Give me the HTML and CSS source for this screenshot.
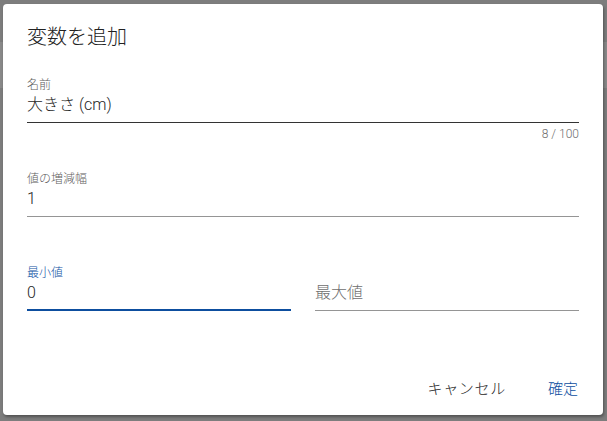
FILE: index.html
```html
<!DOCTYPE html>
<html lang="ja">
<head>
<meta charset="utf-8">
<title>変数を追加</title>
<link rel="stylesheet" href="styles.css">
</head>
<body>
<div class="dialog">
  <h2 class="dialog-title">変数を追加</h2>
  <div class="field">
    <div class="field-box">
      <div class="field-label">名前</div>
      <div class="field-value">大きさ (cm)</div>
    </div>
    <div class="field-hint">8 / 100</div>
  </div>
  <div class="field">
    <div class="field-box field-box--idle">
      <div class="field-label">値の増減幅</div>
      <div class="field-value">1</div>
    </div>
    <div class="field-hint"></div>
  </div>
  <div class="field-row">
    <div class="field">
      <div class="field-box field-box--focused">
        <div class="field-label">最小値</div>
        <div class="field-value">0</div>
      </div>
      <div class="field-hint"></div>
    </div>
    <div class="field">
      <div class="field-box field-box--idle">
        <div class="field-label"></div>
        <div class="field-value field-value--placeholder">最大値</div>
      </div>
      <div class="field-hint"></div>
    </div>
  </div>
  <div class="dialog-actions">
    <button class="btn btn--wide">キャンセル</button>
    <button class="btn btn--primary">確定</button>
  </div>
</div>
</body>
</html>
```
FILE: styles.css
```css
html, body {
  margin: 0;
  height: 100%;
}
body {
  padding: 4px 0 0 3px;
  box-sizing: border-box;
  background: linear-gradient(to bottom, #7d7d7d 0, #7d7d7d 42px, #898989 42px, #898989 88px, #7d7d7d 88px);
  font-family: Roboto, "Noto Sans CJK JP", sans-serif;
  color: rgba(0, 0, 0, 0.87);
}
.dialog {
  width: 600px;
  height: 411px;
  box-sizing: border-box;
  background: #fff;
  border-radius: 4px;
  padding: 21px 24px 8px;
  box-shadow: 1px 2px 3px rgba(0, 0, 0, 0.35);
  display: flex;
  flex-direction: column;
}
.dialog-title {
  margin: 0 0 28px;
  font-size: 20px;
  line-height: 24px;
  font-weight: 300;
  color: #222;
}
.field {
  display: flex;
  flex-direction: column;
  flex: 1;
  min-width: 0;
  margin-bottom: 29px;
}
.field-box {
  padding-bottom: 5px;
  border-bottom: 1px solid #333;
}
.field-box--idle {
  border-bottom-color: #959595;
}
.field-box--focused {
  padding-bottom: 4px;
  border-bottom: 2px solid #0d4e9f;
}
.field-label {
  height: 16px;
  font-size: 12px;
  line-height: 16px;
  font-weight: 300;
  color: #5e5e5e;
}
.field-box--focused .field-label {
  color: #0f52a4;
}
.field-value {
  font-size: 16px;
  line-height: 24px;
  height: 24px;
  font-weight: 300;
  color: #1e1e1e;
}
.field-value--placeholder {
  color: #6e6e6e;
}
.field-hint {
  margin-top: 3px;
  height: 16px;
  font-size: 12px;
  line-height: 16px;
  font-weight: 300;
  text-align: right;
  color: #6e6e6e;
}
.field-row {
  display: flex;
  gap: 24px;
}
.dialog-actions {
  margin-top: 12px;
  margin-right: -7px;
  display: flex;
  justify-content: flex-end;
  gap: 26px;
}
.btn {
  font-family: Roboto, "Noto Sans CJK JP", sans-serif;
  font-size: 15px;
  line-height: 36px;
  height: 36px;
  padding: 0 8px;
  border: none;
  background: transparent;
  color: #262626;
  font-weight: 300;
  cursor: pointer;
}
.btn--wide {
  letter-spacing: 0.7px;
}
.btn--primary {
  color: #0d4e9f;
}
```
